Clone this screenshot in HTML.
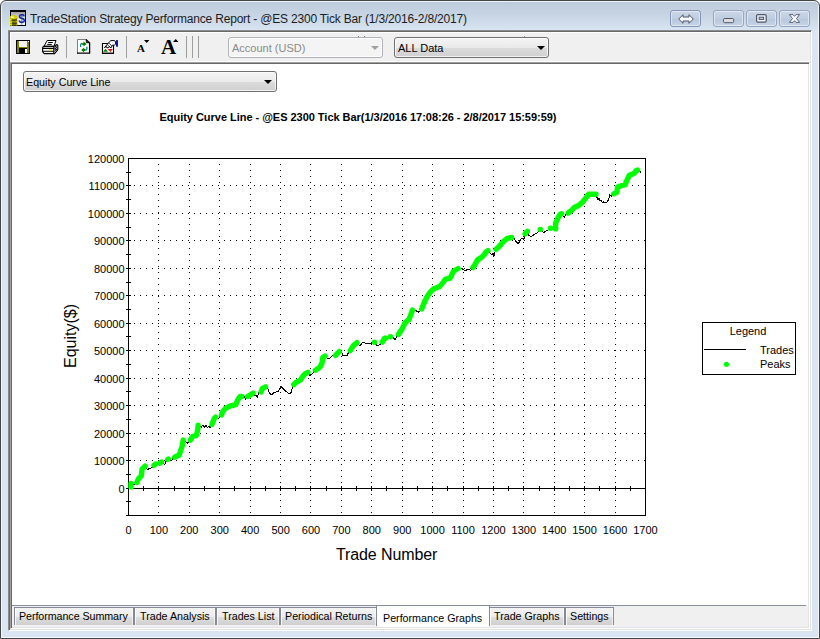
<!DOCTYPE html>
<html><head><meta charset="utf-8"><title>TradeStation Strategy Performance Report</title>
<style>
html,body{margin:0;padding:0;background:#fff;}
body{width:820px;height:639px;overflow:hidden;position:relative;font-family:"Liberation Sans",sans-serif;font-size:12px;color:#000;}
.abs{position:absolute;}
.win{position:absolute;left:0;top:0;width:820px;height:639px;box-sizing:border-box;border:1px solid #454545;border-radius:6px 6px 0 0;
 background:linear-gradient(#bdccdc 2px,#c8d5e4 15px,#d7e3f0 28px,#dbe7f4 30px,#d9e5f2 60px,#d9e5f2 100%);box-shadow:inset 0 0 0 1px rgba(255,255,255,.75);}
.title{position:absolute;left:30px;top:11px;height:16px;line-height:16px;font-size:12px;color:#1c1c1c;white-space:nowrap;letter-spacing:-0.19px;}
.cb{position:absolute;top:10px;height:17px;width:31px;box-sizing:border-box;border:1px solid #97a5c0;border-radius:3px;
 background:linear-gradient(#ccd8e8,#bfcde0 50%,#b7c7dc 51%,#c6d4e6);box-shadow:inset 0 0 0 1px rgba(255,255,255,.45);}
.client{position:absolute;left:8px;top:30px;width:804px;height:601px;box-sizing:border-box;background:#f0f0f0;border:1px solid;border-color:#8c8c8c #fff #fff #8c8c8c;box-shadow:inset 1px 1px 0 #696969,inset -1px -1px 0 #e3e3e3;}
.tbhl{position:absolute;left:10px;top:32px;width:800px;height:30px;box-sizing:border-box;border:1px solid #fff;border-right:none;border-width:1px 0 1px 1px;}
.tbbl{display:none;}
.view{position:absolute;left:10px;top:62px;width:800px;height:567px;box-sizing:border-box;background:#f0f0f0;border:1px solid;border-color:#a0a0a0 #fff #fff #a0a0a0;box-shadow:inset 1px 1px 0 #696969,inset -1px -1px 0 #e3e3e3;}
.paper{position:absolute;left:12px;top:64px;width:796px;height:541px;background:#fff;}
.tabline{position:absolute;left:12px;top:605px;width:794px;height:1px;background:#8a8f9c;}
.tf{position:absolute;top:608px;height:17px;background:linear-gradient(#f3f3f3 0,#ececec 9px,#dedede 9px,#cfcfcf 17px);box-shadow:inset 1px 0 0 rgba(255,255,255,.8),inset -1px 0 0 rgba(255,255,255,.6);}
.tl{position:absolute;background:#848a98;}
.tt{position:absolute;top:609px;height:14px;line-height:14px;font-size:10.7px;white-space:nowrap;color:#000;}
.sep{position:absolute;top:36px;width:1px;height:22px;background:#a0a0a0;}
.dd{position:absolute;box-sizing:border-box;border:1px solid #707070;border-radius:3px;font-size:11.3px;white-space:nowrap;box-shadow:inset 0 0 0 1px rgba(255,255,255,.75);}
svg.chart{position:absolute;left:0;top:0;}
svg.ico{position:absolute;overflow:visible;}
</style></head><body>
<div class="win"></div>
<!-- title icon -->
<svg class="ico" style="left:10px;top:10px" width="16" height="16" viewBox="0 0 16 16">
 <defs><linearGradient id="tig" x1="0" y1="0" x2="0" y2="1"><stop offset="0" stop-color="#9c9c9c"/><stop offset=".55" stop-color="#f4f4f4"/><stop offset="1" stop-color="#fff"/></linearGradient></defs>
 <rect x="0" y="0" width="16" height="16" fill="#000"/>
 <rect x="1" y="2" width="14" height="13" fill="url(#tig)"/>
 <path d="M0 7 Q0 5.2 3.5 5.2 Q7.4 5.2 7.4 7 V15 Q7.4 16 3.5 16 Q0 16 0 15 Z" fill="#b4b400"/>
 <ellipse cx="3.6" cy="7.1" rx="3.5" ry="1.8" fill="#d2d200"/>
 <rect x="1" y="6.5" width="2.6" height="1.3" fill="#fff"/>
 <path d="M1.6 8.8 Q4 10.2 6.8 8.4 V10.8 Q4 12.2 1.6 11 Z" fill="#505000"/>
 <rect x="2" y="12.6" width="4.8" height="1" fill="#000"/>
 <rect x="2" y="14.6" width="4.4" height="1" fill="#000"/>
 <rect x="0.2" y="9" width="1.3" height="1.2" fill="#ffff00"/><rect x="0.2" y="11.6" width="1.3" height="1.2" fill="#ffff00"/><rect x="0.2" y="14" width="1.3" height="1.2" fill="#ffff00"/>
 <text x="8.2" y="13" font-family="Liberation Sans, sans-serif" font-weight="bold" font-size="12.5" fill="#2020a0">$</text>
</svg>
<div class="title">TradeStation Strategy Performance Report - @ES 2300 Tick Bar (1/3/2016-2/8/2017)</div>
<!-- caption buttons -->
<div class="cb" style="left:670px;border-color:#8493b6"><svg class="ico" style="left:7px;top:2.5px" width="16" height="10" viewBox="0 0 16 10"><path d="M0.7 5 L5 0.7 V3 H11 V0.7 L15.3 5 L11 9.3 V7 H5 V9.3 Z" fill="#f6f8fb" stroke="#50566a" stroke-width="1"/></svg></div>
<div class="cb" style="left:713px"><svg class="ico" style="left:9px;top:7px" width="12" height="6" viewBox="0 0 12 6"><rect x="0.5" y="0.5" width="10.2" height="4.2" rx="1.2" fill="#dcdde0" stroke="#50566a" stroke-width="1"/></svg></div>
<div class="cb" style="left:746px"><svg class="ico" style="left:9px;top:3px" width="12" height="9" viewBox="0 0 12 9"><rect x="0.6" y="0.6" width="9.6" height="7.6" rx="1.2" fill="#f1f3f7" stroke="#50566a" stroke-width="1.2"/><rect x="3.2" y="3.2" width="4.4" height="2.2" fill="#c3cfe0" stroke="#50566a" stroke-width="1"/></svg></div>
<div class="cb" style="left:779px"><svg class="ico" style="left:9px;top:3px" width="12" height="10" viewBox="0 0 12 10"><path d="M0.4 0.6 H4 L5.5 2.3 L7 0.6 H10.6 L7.5 4.5 L10.6 8.4 H7 L5.5 6.7 L4 8.4 H0.4 L3.5 4.5 Z" fill="#f6f8fb" stroke="#50566a" stroke-width="0.9" stroke-linejoin="round"/></svg></div>

<div class="client"></div>
<div class="tbhl"></div><div class="tbbl"></div>
<!-- toolbar icons -->
<svg class="ico" style="left:16px;top:40px" width="15" height="14" viewBox="0 0 15 14" shape-rendering="crispEdges">
 <rect x="0" y="0" width="14" height="14" fill="#000"/>
 <rect x="1" y="1" width="12" height="12" fill="#808000"/>
 <rect x="3" y="1" width="8" height="6" fill="#f4f4f4"/>
 <rect x="3" y="8" width="8" height="5" fill="#000"/>
 <rect x="9" y="9" width="2" height="4" fill="#fff"/>
 <rect x="12" y="1" width="1" height="1" fill="#fff"/>
</svg>
<svg class="ico" style="left:42px;top:40px" width="17" height="14" viewBox="0 0 17 14">
 <path d="M5.2 0.5 H14 L12 6.3 H2 Z" fill="#fff" stroke="#000" stroke-width="1"/>
 <path d="M6.2 2.5 H10.8 M5.2 4.4 H9.8" stroke="#000" stroke-width="1"/>
 <path d="M1.6 6.4 H11.6 L15 4.6 L15.8 5.4 V9.6 L12.6 13.6 H2.2 L0.6 11.6 V7.6 Z" fill="#fff" stroke="#000" stroke-width="1.1" stroke-linejoin="round"/>
 <path d="M0.6 8.4 H11.8 M0.6 11.3 H11.8 M11.8 7 V13.4" stroke="#000" stroke-width="1.1"/>
 <path d="M12.4 7.4 L15.2 5.6 M12.4 9.4 L15.2 7.2 M12.4 11.4 L15.2 8.8 M13 6.2 L15 8.4 M12.6 8.2 L14.4 10.2" stroke="#000" stroke-width=".9"/>
 <rect x="6.8" y="9.3" width="3.3" height="1.4" fill="#e8e800"/>
</svg>
<div class="sep" style="left:66px"></div>
<svg class="ico" style="left:77px;top:39px" width="14" height="15" viewBox="0 0 14 15">
 <path d="M0.5 0.5 H9 L12.6 4 V14.2 H0.5 Z" fill="#fff"/>
 <path d="M0.5 14.5 V0.5 H9.5" fill="none" stroke="#808080" stroke-width="1"/>
 <path d="M9 0.5 L12.6 4 V14.15 H0" fill="none" stroke="#000" stroke-width="1.3"/><path d="M9.3 1 V3.7 H12.4" fill="none" stroke="#000" stroke-width="1"/>
 <path d="M6.5 2.6 L9.6 5 L6.5 7.4 V5.9 H5.2 V4.1 H6.5 Z" fill="#008000"/>
 <path d="M5.2 4.3 C3.4 4.6 3.2 6.6 3.8 8" fill="none" stroke="#008890" stroke-width="1.3"/>
 <path d="M7.2 8.6 L4.1 11 L7.2 13.6 V11.9 H8.2 V10.1 H7.2 Z" fill="#008000"/>
 <path d="M8.2 11.2 C10 11 10.4 9.2 9.7 7.8" fill="none" stroke="#008890" stroke-width="1.3"/>
</svg>
<svg class="ico" style="left:102px;top:39px" width="17" height="15" viewBox="0 0 17 15">
 <path d="M0.5 4.5 H11.5 V14.2 H0.5 Z" fill="#fff" stroke="#000" stroke-width="1.1"/>
 <path d="M0 14.3 H12" stroke="#000" stroke-width="1.1"/>
 <path d="M1 12.8 L3.5 9.8 L6 12.8 Z" fill="#008000"/>
 <path d="M5.8 10 H10.8 L8.3 13 Z" fill="#ff0000"/>
 <path d="M2.4 8.6 L7.6 2.8 L8.6 1.6 H12.6 L13.6 3 V5.2 L12.2 6.2 H10.6 L8.8 9 L7.4 7.4 L5.6 9.2 L4.2 7.6 Z" fill="#fff" stroke="#000" stroke-width="1"/>
 <path d="M5.4 5.6 L8.8 9 M6.8 4 L10 7.2 M4 7.2 L5.6 9" stroke="#000" stroke-width=".8"/>
 <rect x="14.1" y="1.1" width="1.8" height="6.6" fill="#0000a0"/>
</svg>
<div class="sep" style="left:126px"></div>
<div class="abs" style="left:137px;top:43px;font-family:'Liberation Serif',serif;font-weight:bold;font-size:11px;line-height:11px;">A</div>
<svg class="ico" style="left:144px;top:40px" width="6" height="4"><path d="M0 0H5.4L2.7 3Z" fill="#000"/></svg>
<div class="abs" style="left:161px;top:37px;font-family:'Liberation Serif',serif;font-weight:bold;font-size:21px;line-height:21px;">A</div>
<svg class="ico" style="left:173px;top:39px" width="6" height="4"><path d="M0 3H5.4L2.7 0Z" fill="#000"/></svg>
<div class="sep" style="left:186px;background:#9c9c9c"></div>
<div class="sep" style="left:192px;background:#9c9c9c"></div>
<div class="sep" style="left:198px;background:#9c9c9c"></div>
<div class="abs" style="left:358px;top:36px;width:1px;height:1px;background:#777"></div><div class="abs" style="left:364px;top:36px;width:1px;height:1px;background:#777"></div><div class="abs" style="left:524px;top:36px;width:1px;height:1px;background:#999"></div>
<!-- account dd -->
<div class="dd" style="left:228px;top:37px;width:155px;height:21px;background:#f4f4f4;border-color:#b0b4b8;color:#8a8a8a;line-height:21px;padding-left:3px;font-size:11px;">Account (USD)
 <svg class="ico" style="right:3px;top:8px" width="8" height="4"><path d="M0 0H8L4 4Z" fill="#a0a0a0"/></svg></div>
<div class="dd" style="left:394px;top:37px;width:155px;height:21px;background:linear-gradient(#f4f4f4,#eaeaea 50%,#dcdcdc 51%,#d0d0d0);line-height:21px;padding-left:3px;font-size:11px;">ALL Data
 <svg class="ico" style="right:3px;top:8px" width="8" height="4"><path d="M0 0H8L4 4Z" fill="#000"/></svg></div>

<div class="view"></div>
<div class="paper"></div>
<div class="dd" style="left:23px;top:71px;width:254px;height:21px;background:linear-gradient(#f4f4f4,#eaeaea 50%,#dcdcdc 51%,#d0d0d0);line-height:21px;padding-left:2px;font-size:10.7px;">Equity Curve Line
 <svg class="ico" style="right:4px;top:8px" width="8" height="4"><path d="M0 0H8L4 4Z" fill="#000"/></svg></div>
<svg class="chart" width="820" height="639" viewBox="0 0 820 639">
<g stroke="#000" stroke-width="1" stroke-dasharray="1 5" shape-rendering="crispEdges"><line x1="128" y1="460.5" x2="645" y2="460.5"/><line x1="128" y1="433.5" x2="645" y2="433.5"/><line x1="128" y1="405.5" x2="645" y2="405.5"/><line x1="128" y1="378.5" x2="645" y2="378.5"/><line x1="128" y1="350.5" x2="645" y2="350.5"/><line x1="128" y1="323.5" x2="645" y2="323.5"/><line x1="128" y1="295.5" x2="645" y2="295.5"/><line x1="128" y1="268.5" x2="645" y2="268.5"/><line x1="128" y1="240.5" x2="645" y2="240.5"/><line x1="128" y1="213.5" x2="645" y2="213.5"/><line x1="128" y1="185.5" x2="645" y2="185.5"/><line x1="158.5" y1="158" x2="158.5" y2="515"/><line x1="189.5" y1="158" x2="189.5" y2="515"/><line x1="219.5" y1="158" x2="219.5" y2="515"/><line x1="250.5" y1="158" x2="250.5" y2="515"/><line x1="280.5" y1="158" x2="280.5" y2="515"/><line x1="310.5" y1="158" x2="310.5" y2="515"/><line x1="341.5" y1="158" x2="341.5" y2="515"/><line x1="371.5" y1="158" x2="371.5" y2="515"/><line x1="402.5" y1="158" x2="402.5" y2="515"/><line x1="432.5" y1="158" x2="432.5" y2="515"/><line x1="463.5" y1="158" x2="463.5" y2="515"/><line x1="493.5" y1="158" x2="493.5" y2="515"/><line x1="523.5" y1="158" x2="523.5" y2="515"/><line x1="554.5" y1="158" x2="554.5" y2="515"/><line x1="584.5" y1="158" x2="584.5" y2="515"/><line x1="615.5" y1="158" x2="615.5" y2="515"/></g>
<g stroke="#000" stroke-width="1" fill="none" shape-rendering="crispEdges"><path d="M128.5 158.5H645.5V515.5H128.5Z M128 488.5H645"/><path d="M126 515.5h5M126 501.5h5M126 488.5h5M126 474.5h5M126 460.5h5M126 446.5h5M126 433.5h5M126 419.5h5M126 405.5h5M126 391.5h5M126 378.5h5M126 364.5h5M126 350.5h5M126 336.5h5M126 323.5h5M126 309.5h5M126 295.5h5M126 282.5h5M126 268.5h5M126 254.5h5M126 240.5h5M126 227.5h5M126 213.5h5M126 199.5h5M126 185.5h5M126 172.5h5M143.5 486v5M158.5 486v5M174.5 486v5M189.5 486v5M204.5 486v5M219.5 486v5M234.5 486v5M250.5 486v5M265.5 486v5M280.5 486v5M295.5 486v5M310.5 486v5M326.5 486v5M341.5 486v5M356.5 486v5M371.5 486v5M386.5 486v5M402.5 486v5M417.5 486v5M432.5 486v5M447.5 486v5M463.5 486v5M478.5 486v5M493.5 486v5M508.5 486v5M523.5 486v5M539.5 486v5M554.5 486v5M569.5 486v5M584.5 486v5M599.5 486v5M615.5 486v5M630.5 486v5"/></g>
<path d="M131.0 487.0 L131.0 483.5 L133.0 484.5 L135.0 484.0 L136.9 482.5 L138.4 478.8 L141.3 475.8 L142.1 469.1 L145.1 466.1 L147.3 469.8 L150.0 468.2 L152.5 467.6 L154.0 465.4 L155.5 464.2 L157.5 465.0 L159.9 463.1 L161.4 462.1 L163.0 462.5 L164.8 464.8 L166.0 461.5 L167.8 459.4 L168.3 459.0 L170.0 459.5 L171.1 461.2 L173.0 458.5 L174.8 457.2 L179.2 455.0 L180.7 450.5 L182.2 446.0 L183.2 440.1 L185.5 441.5 L187.4 443.1 L189.0 441.5 L190.4 440.1 L192.6 436.4 L196.3 435.7 L197.8 429.7 L198.1 425.3 L200.0 426.0 L201.5 427.0 L203.0 424.8 L204.5 427.3 L206.0 425.0 L207.5 427.8 L209.0 425.8 L209.9 428.0 L211.9 424.5 L214.2 418.6 L215.6 417.1 L217.5 417.8 L218.6 418.8 L220.0 416.5 L221.6 414.9 L222.4 412.1 L225.4 408.4 L229.9 406.1 L235.8 404.6 L238.0 399.4 L240.3 396.5 L241.7 396.5 L244.0 396.5 L245.5 399.2 L246.5 397.8 L247.7 396.5 L252.9 393.2 L254.4 395.7 L255.9 395.0 L257.3 397.4 L258.8 392.7 L261.1 392.0 L262.5 388.3 L265.5 386.8 L268.2 389.0 L269.2 392.7 L271.5 394.9 L273.7 392.7 L278.1 391.3 L281.1 386.8 L284.1 389.8 L287.1 392.3 L290.0 394.0 L291.5 392.0 L292.3 387.5 L293.8 384.6 L296.0 382.3 L300.4 380.1 L302.7 376.4 L305.6 373.4 L307.9 372.4 L310.1 375.7 L312.3 373.9 L313.5 372.0 L315.4 370.2 L319.9 367.3 L322.1 362.8 L322.8 357.6 L325.1 356.1 L328.0 358.8 L330.3 358.0 L332.5 355.4 L335.5 355.4 L339.2 351.7 L342.1 353.2 L342.9 355.6 L347.3 355.6 L348.2 353.0 L350.3 350.6 L353.3 345.7 L357.0 342.7 L360.0 346.0 L362.9 342.0 L365.9 343.4 L370.4 343.7 L372.5 342.5 L374.5 342.3 L374.6 342.3 L377.1 346.0 L380.0 344.7 L382.3 342.0 L384.5 338.3 L386.0 338.2 L388.0 338.0 L390.4 336.8 L390.5 336.8 L393.4 337.8 L395.6 340.0 L396.3 337.2 L398.4 334.5 L402.4 328.2 L405.4 322.3 L409.1 319.3 L411.3 313.4 L412.5 310.1 L415.8 310.7 L418.8 312.2 L421.7 308.9 L424.0 303.0 L426.9 297.0 L429.9 292.5 L433.6 288.8 L439.6 286.6 L443.3 282.1 L445.5 279.2 L450.0 278.4 L452.2 274.0 L453.7 271.0 L458.2 268.5 L461.9 268.5 L464.8 270.9 L467.8 269.3 L470.8 270.2 L473.0 267.3 L475.2 264.3 L477.5 259.9 L481.2 257.6 L484.2 254.7 L486.4 251.7 L487.9 250.6 L490.2 253.1 L491.7 254.8 L493.0 253.2 L493.9 256.8 L494.7 252.5 L496.1 249.4 L499.9 245.7 L503.6 241.3 L507.3 238.3 L511.7 237.5 L514.0 238.3 L516.2 241.7 L518.4 243.7 L520.7 239.0 L522.9 238.3 L523.9 239.8 L525.1 233.8 L527.3 231.3 L528.8 235.3 L531.1 237.0 L534.0 234.6 L537.0 233.1 L540.3 229.4 L540.4 229.4 L543.7 232.5 L547.4 230.4 L550.4 228.3 L550.5 228.3 L553.0 229.0 L555.6 228.9 L555.6 223.4 L557.8 218.2 L560.0 214.5 L561.5 213.8 L564.5 217.7 L565.3 215.0 L568.2 213.0 L571.9 210.1 L574.2 207.5 L578.6 205.6 L582.6 202.0 L586.3 197.5 L588.6 194.3 L596.0 194.3 L596.7 196.8 L598.0 199.5 L599.0 198.5 L600.2 200.8 L601.2 199.9 L602.3 202.5 L603.4 201.8 L604.5 202.7 L606.4 202.5 L608.6 199.8 L609.8 194.6 L611.6 196.1 L613.8 193.8 L616.8 192.3 L617.5 187.1 L621.3 185.7 L625.0 184.9 L627.2 179.7 L629.4 175.3 L633.9 173.5 L636.1 170.8 L637.6 170.1 L640.0 171.5 L640.6 172.6" fill="none" stroke="#000" stroke-width="1" stroke-linejoin="round" shape-rendering="crispEdges"/>
<path d="M131.0 487.0 L131.0 483.5 M136.9 482.5 L138.4 478.8 L141.3 475.8 L142.1 469.1 L145.1 466.1 M154.0 465.4 L155.5 464.2 M159.9 463.1 L161.4 462.1 M167.8 459.4 L168.3 459.0 M174.8 457.2 L179.2 455.0 L180.7 450.5 L182.2 446.0 L183.2 440.1 M190.4 440.1 L192.6 436.4 L196.3 435.7 L197.8 429.7 L198.1 425.3 M211.9 424.5 L214.2 418.6 L215.6 417.1 M221.6 414.9 L222.4 412.1 L225.4 408.4 L229.9 406.1 L235.8 404.6 L238.0 399.4 L240.3 396.5 L241.7 396.5 M247.7 396.5 L252.9 393.2 M261.1 392.0 L262.5 388.3 L265.5 386.8 M293.8 384.6 L296.0 382.3 L300.4 380.1 L302.7 376.4 L305.6 373.4 L307.9 372.4 M315.4 370.2 L319.9 367.3 L322.1 362.8 L322.8 357.6 L325.1 356.1 M335.5 355.4 L339.2 351.7 M350.3 350.6 L353.3 345.7 L357.0 342.7 M374.5 342.3 L374.6 342.3 M382.3 342.0 L384.5 338.3 L386.0 338.2 M390.4 336.8 L390.5 336.8 M398.4 334.5 L402.4 328.2 L405.4 322.3 L409.1 319.3 L411.3 313.4 L412.5 310.1 M421.7 308.9 L424.0 303.0 L426.9 297.0 L429.9 292.5 L433.6 288.8 L439.6 286.6 L443.3 282.1 L445.5 279.2 L450.0 278.4 L452.2 274.0 L453.7 271.0 L458.2 268.5 M473.0 267.3 L475.2 264.3 L477.5 259.9 L481.2 257.6 L484.2 254.7 L486.4 251.7 L487.9 250.6 M496.1 249.4 L499.9 245.7 L503.6 241.3 L507.3 238.3 L511.7 237.5 M525.1 233.8 L527.3 231.3 M540.3 229.4 L540.4 229.4 M550.4 228.3 L550.5 228.3 M555.6 228.9 L555.6 223.4 L557.8 218.2 L560.0 214.5 L561.5 213.8 M568.2 213.0 L571.9 210.1 L574.2 207.5 L578.6 205.6 L582.6 202.0 L586.3 197.5 L588.6 194.3 L596.0 194.3 M613.8 193.8 L616.8 192.3 L617.5 187.1 L621.3 185.7 L625.0 184.9 L627.2 179.7 L629.4 175.3 L633.9 173.5 L636.1 170.8 L637.6 170.1" fill="none" stroke="#00ff00" stroke-width="5.4" stroke-linecap="round" stroke-linejoin="round"/>
<g font-family="Liberation Sans, sans-serif" font-size="11" fill="#000"><text x="124.5" y="492.5" text-anchor="end">0</text><text x="124.5" y="464.5" text-anchor="end">10000</text><text x="124.5" y="437.5" text-anchor="end">20000</text><text x="124.5" y="409.5" text-anchor="end">30000</text><text x="124.5" y="382.5" text-anchor="end">40000</text><text x="124.5" y="354.5" text-anchor="end">50000</text><text x="124.5" y="327.5" text-anchor="end">60000</text><text x="124.5" y="299.5" text-anchor="end">70000</text><text x="124.5" y="272.5" text-anchor="end">80000</text><text x="124.5" y="244.5" text-anchor="end">90000</text><text x="124.5" y="217.5" text-anchor="end">100000</text><text x="124.5" y="189.5" text-anchor="end">110000</text><text x="124.5" y="162.5" text-anchor="end">120000</text><text x="128.5" y="534" text-anchor="middle">0</text><text x="158.9" y="534" text-anchor="middle">100</text><text x="189.3" y="534" text-anchor="middle">200</text><text x="219.7" y="534" text-anchor="middle">300</text><text x="250.1" y="534" text-anchor="middle">400</text><text x="280.6" y="534" text-anchor="middle">500</text><text x="311.0" y="534" text-anchor="middle">600</text><text x="341.4" y="534" text-anchor="middle">700</text><text x="371.8" y="534" text-anchor="middle">800</text><text x="402.2" y="534" text-anchor="middle">900</text><text x="432.6" y="534" text-anchor="middle">1000</text><text x="463.0" y="534" text-anchor="middle">1100</text><text x="493.4" y="534" text-anchor="middle">1200</text><text x="523.8" y="534" text-anchor="middle">1300</text><text x="554.2" y="534" text-anchor="middle">1400</text><text x="584.6" y="534" text-anchor="middle">1500</text><text x="615.1" y="534" text-anchor="middle">1600</text><text x="645.5" y="534" text-anchor="middle">1700</text></g>
<text x="159.5" y="120.5" font-family="Liberation Sans, sans-serif" font-size="11" font-weight="bold" fill="#000" textLength="397" lengthAdjust="spacing">Equity Curve Line - @ES 2300 Tick Bar(1/3/2016 17:08:26 - 2/8/2017 15:59:59)</text>
<text x="336" y="559.5" font-family="Liberation Sans, sans-serif" font-size="16" fill="#000" textLength="101.3" lengthAdjust="spacing">Trade Number</text>
<text transform="translate(76 368) rotate(-90)" font-family="Liberation Sans, sans-serif" font-size="16" fill="#000">Equity($)</text>
<rect x="702.5" y="322.5" width="93" height="52" fill="#fff" stroke="#000" stroke-width="1" shape-rendering="crispEdges"/>
<text x="748" y="335" text-anchor="middle" font-family="Liberation Sans, sans-serif" font-size="11" fill="#000">Legend</text>
<path d="M704 349.5H746" stroke="#000" stroke-width="1" shape-rendering="crispEdges"/>
<text x="760" y="353.5" font-family="Liberation Sans, sans-serif" font-size="11" fill="#000">Trades</text>
<circle cx="726.5" cy="364.3" r="2.6" fill="#00ff00"/>
<text x="760" y="367.5" font-family="Liberation Sans, sans-serif" font-size="11" fill="#000">Peaks</text>
</svg>
<div class="tabline"></div>
<div class="tf" style="left:15px;width:118px"></div><div class="tf" style="left:135px;width:80px"></div><div class="tf" style="left:217px;width:62px"></div><div class="tf" style="left:281px;width:95px"></div><div class="tf" style="left:490px;width:74px"></div><div class="tf" style="left:566px;width:47px"></div>
<div class="tl" style="left:14px;top:607px;width:362px;height:1px"></div><div class="tl" style="left:490px;top:607px;width:124px;height:1px"></div>
<div class="tl" style="left:14px;top:607px;width:1px;height:18px"></div><div class="tl" style="left:133px;top:607px;width:2px;height:18px"></div><div class="tl" style="left:215px;top:607px;width:2px;height:18px"></div><div class="tl" style="left:279px;top:607px;width:2px;height:18px"></div><div class="tl" style="left:564px;top:607px;width:2px;height:18px"></div><div class="tl" style="left:613px;top:607px;width:1px;height:18px"></div>
<div class="abs" style="left:377px;top:606px;width:112px;height:21px;background:#fff"></div><div class="tl" style="left:376px;top:605px;width:1px;height:21px"></div><div class="tl" style="left:489px;top:605px;width:1px;height:21px"></div>
<div class="tt" style="left:19px;letter-spacing:-0.06px">Performance Summary</div><div class="tt" style="left:140px">Trade Analysis</div><div class="tt" style="left:222px">Trades List</div><div class="tt" style="left:285px">Periodical Returns</div><div class="tt" style="left:494px">Trade Graphs</div><div class="tt" style="left:570px">Settings</div><div class="tt" style="left:383px;top:611px">Performance Graphs</div>
</body></html>
